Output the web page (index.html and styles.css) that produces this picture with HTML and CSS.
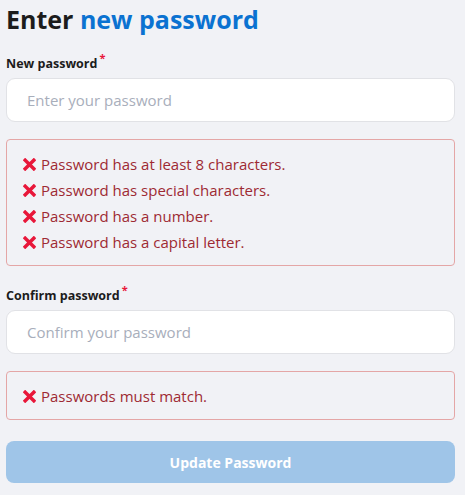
FILE: index.html
```html
<!DOCTYPE html>
<html lang="en">
<head>
    <meta charset="UTF-8">
    <meta name="viewport" content="width=device-width, initial-scale=1.0">
    <title>Enter new password</title>
    <link rel="stylesheet" href="styles.css">
</head>
<body>
    <div class="page">
        <h1>Enter <span class="accent">new password</span></h1>

        <!-- New password -->
        <label class="field-label" for="new-password">New password<span class="req">*</span></label>
        <input class="field-input" type="password" id="new-password" placeholder="Enter your password">

        <ul class="rules">
            <li><svg class="cross" viewBox="0 0 12 12"><path d="M2 2L10 10M10 2L2 10"/></svg>Password has at least 8 characters.</li>
            <li><svg class="cross" viewBox="0 0 12 12"><path d="M2 2L10 10M10 2L2 10"/></svg>Password has special characters.</li>
            <li><svg class="cross" viewBox="0 0 12 12"><path d="M2 2L10 10M10 2L2 10"/></svg>Password has a number.</li>
            <li><svg class="cross" viewBox="0 0 12 12"><path d="M2 2L10 10M10 2L2 10"/></svg>Password has a capital letter.</li>
        </ul>

        <!-- Confirm password -->
        <label class="field-label" for="confirm-password">Confirm password<span class="req">*</span></label>
        <input class="field-input" type="password" id="confirm-password" placeholder="Confirm your password">

        <ul class="rules">
            <li><svg class="cross" viewBox="0 0 12 12"><path d="M2 2L10 10M10 2L2 10"/></svg>Passwords must match.</li>
        </ul>

        <button class="submit" disabled>Update Password</button>
    </div>
</body>
</html>
```

FILE: styles.css
```css
body {
    font-family: "Open Sans", Arial, sans-serif;
    background-color: #f1f2f6;
    margin: 0;
}
.page {
    width: 449px;
    margin-left: 6px;
    padding-top: 2px;
}
h1 {
    font-size: 25px;
    font-weight: 700;
    color: #1c1c1c;
    margin: 0 0 19px;
    line-height: 34px;
}
.accent {
    color: #0b72d1;
}
.field-label {
    display: block;
    font-size: 12.5px;
    font-weight: 700;
    color: #1c1c1c;
    line-height: 18px;
    margin-bottom: 5px;
}
.req {
    color: #e8173a;
    font-size: 11px;
    line-height: 0;
    margin-left: 2px;
    position: relative;
    top: -6px;
}
.field-input {
    display: block;
    box-sizing: border-box;
    width: 100%;
    height: 44px;
    padding: 0 20px;
    border: 1px solid #e1e2e6;
    border-radius: 9px;
    background: #fff;
    font-family: inherit;
    font-size: 15px;
    color: #1c1c1c;
    outline: none;
}
.field-input::placeholder {
    color: #a8aebb;
}
.rules {
    list-style: none;
    margin: 17px 0 21px;
    padding: 11px 16px 10px;
    border: 1px solid #e4a6a6;
    border-radius: 4px;
}
.rules li {
    display: flex;
    align-items: center;
    font-size: 15px;
    line-height: 26px;
    color: #9e2a33;
}
.cross {
    width: 13px;
    height: 13px;
    margin-right: 5px;
    flex-shrink: 0;
}
.cross path {
    stroke: #e8173a;
    stroke-width: 3.2;
    stroke-linecap: square;
    fill: none;
}
.submit {
    display: block;
    width: 100%;
    height: 42px;
    margin-top: 20px;
    border: none;
    border-radius: 8px;
    background-color: #9fc5e8;
    color: #fff;
    font-family: inherit;
    font-size: 14px;
    font-weight: 700;
}
```
